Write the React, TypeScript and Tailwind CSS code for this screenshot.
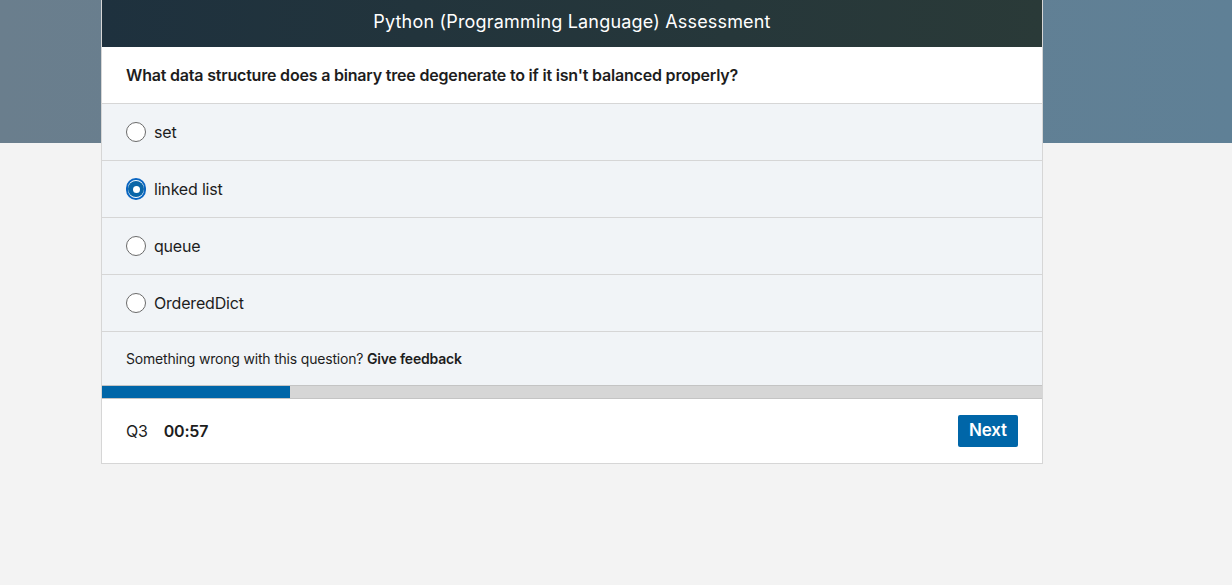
import React from "react";

const options = ["set", "linked list", "queue", "OrderedDict"];

const Radio = ({ checked }: { checked: boolean }) =>
  checked ? (
    <span className="flex h-[22px] w-[22px] items-center justify-center rounded-full border-2 border-[#0a66c2] bg-white">
      <span className="flex h-[16px] w-[16px] items-center justify-center rounded-full bg-[#0a66a8]">
        <span className="h-[7px] w-[7px] rounded-full bg-white" />
      </span>
    </span>
  ) : (
    <span className="h-[20px] w-[20px] rounded-full border border-[#6a6a6a] bg-white" />
  );

export default function App() {
  const selected = 1;
  return (
    <div
      className="relative min-h-[585px] bg-[#f3f3f3] tracking-[-0.012em]"
      style={{ fontFamily: "Inter, 'Noto Sans', sans-serif" }}
    >
      <div className="absolute inset-x-0 top-0 h-[143px] bg-[linear-gradient(to_right,#6a7e8d,#5f8096)]" />
      <div className="relative ml-[101px] w-[942px] border-x border-b border-[#d6d6d6] bg-white">
        <div className="flex h-[47px] items-center justify-center bg-[linear-gradient(to_right,#1e313e,#2a3a38)] pb-1 text-[18px] tracking-[0.01em] text-white">
          Python (Programming Language) Assessment
        </div>
        <div className="flex h-[57px] items-center border-b border-[#d6d6d6] px-6 text-[16px] font-semibold text-[#1d1d1d]">
          What data structure does a binary tree degenerate to if it isn't balanced properly?
        </div>
        {options.map((o, i) => (
          <div
            key={o}
            className="flex h-[57px] items-center gap-2 border-b border-[#d6d6d6] bg-[#f1f4f7] pl-6 text-[16px] text-[#1d1d1d]"
          >
            <span className="flex w-[20px] items-center justify-center">
              <Radio checked={i === selected} />
            </span>
            <span>{o}</span>
          </div>
        ))}
        <div className="flex h-[53px] items-center bg-[#f1f4f7] px-6 text-[14px] text-[#1d1d1d]">
          Something wrong with this question?&nbsp;<span className="font-semibold">Give feedback</span>
        </div>
        <div className="h-[14px] border-y border-[#c4c4c4] bg-[#d6d6d6]">
          <div className="h-full w-[20%] bg-[#0066a8]" />
        </div>
        <div className="flex h-[64px] items-center justify-between px-6">
          <div className="flex items-center gap-4 text-[16px] text-[#1d1d1d]">
            <span>Q3</span>
            <span className="font-semibold">00:57</span>
          </div>
          <button className="h-[32px] w-[60px] rounded-[2px] bg-[#0066a8] text-[17px] font-semibold text-white">
            Next
          </button>
        </div>
      </div>
    </div>
  );
}
